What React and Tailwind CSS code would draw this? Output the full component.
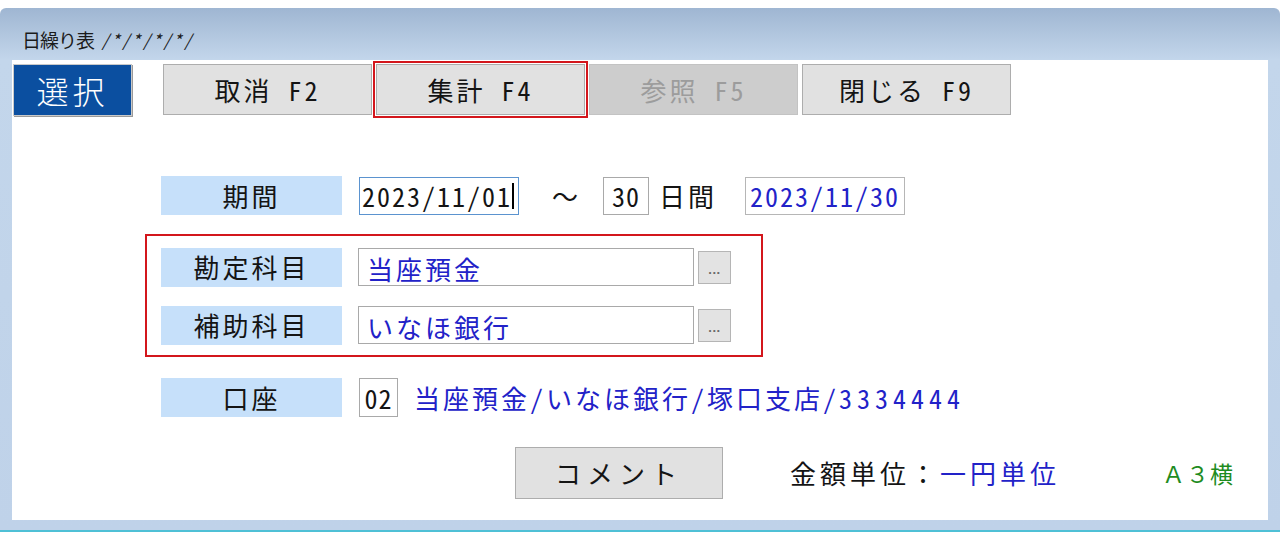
import React from 'react';

const jp = "font-['Noto_Sans_CJK_JP','Noto_Sans',sans-serif]";
const hw = "[font-feature-settings:'hwid']";

const buttons = [
    { label: '取消 F2', state: 'normal' },
    { label: '集計 F4', state: 'marked' },
    { label: '参照 F5', state: 'disabled' },
    { label: '閉じる F9', state: 'normal' },
];

function FuncButton({ label, state }) {
    const base = `flex h-[51px] w-[209px] items-center justify-center border text-[26px] tracking-[3px] leading-none ${hw}`;
    if (state === 'disabled') {
        return <div className={`${base} border-[#c3c3c3] bg-[#cdcdcd] text-[#9c9c9c]`}>{label}</div>;
    }
    const btn = <div className={`${base} border-[#adadad] bg-[#e1e1e1] text-[#141414]`}>{label}</div>;
    if (state === 'marked') {
        return <div className="-mx-[3px] border-2 border-[#d3161c] p-px">{btn}</div>;
    }
    return btn;
}

function Label({ children }) {
    return (
        <div className="flex h-[39px] w-[181px] shrink-0 items-center justify-center bg-[#c6e0fa] text-[26px] tracking-[3px] leading-none text-[#141414]">
            {children}
        </div>
    );
}

function Picker() {
    return (
        <div className="ml-[4px] flex h-[33px] w-[33px] items-end justify-center border border-[#b5b5b5] bg-[#e3e3e3] pb-[7px] font-['Liberation_Sans',sans-serif] text-[13px] font-bold leading-none tracking-[0.5px] text-[#6a6a6a]">
            ...
        </div>
    );
}

export default function App() {
    return (
        <div className={`h-[545px] w-[1280px] overflow-hidden bg-white pt-[8px] ${jp}`}>
            <div className="h-[522px] rounded-t-[6px] bg-[linear-gradient(to_bottom,#9fb6d2_0px,#c3d6eb_52px,#bfd2e9_100%)]">
                {/* title bar */}
                <div className="flex h-[52px] items-center pl-[22px] pt-[10px] leading-none text-[#1b1b1b]">
                    <span className="text-[19px] tracking-[-1px]">日繰り表</span>
                    <span className="ml-[8px] text-[17px] italic tracking-[3px]">/*/*/*/*/</span>
                </div>

                {/* client area */}
                <div className="mx-[12px] h-[460px] bg-white">
                    {/* function keys */}
                    <div className="flex h-[58px] items-center pt-px">
                        <div className="ml-px flex h-[52px] w-[119px] items-center justify-center border border-[#c9c9c9] bg-[#0b4fa0] text-[32px] font-light tracking-[4px] leading-none text-white shadow-[1px_1px_0_#9a9a9a]">
                            選択
                        </div>
                        <div className="ml-[31px] flex items-center gap-[4px]">
                            {buttons.map((b) => (
                                <FuncButton key={b.label} label={b.label} state={b.state} />
                            ))}
                        </div>
                    </div>

                    <div className="pl-[133px]">
                        {/* 期間 */}
                        <div className="ml-[16px] mt-[58px] flex h-[39px] items-center text-[26px] leading-none text-[#141414]">
                            <Label>期間</Label>
                            <div className={`ml-[17px] flex h-[38px] w-[160px] items-center border-[1.5px] border-[#5b93cf] pl-[2px] tracking-[2px] ${hw}`}>
                                2023/11/01
                                <span className="h-[26px] w-[2px] bg-black" />
                            </div>
                            <span className="ml-[33px] tracking-[3px]">～</span>
                            <div className={`ml-[22px] flex h-[38px] w-[46px] items-center justify-center border border-[#a9a9a9] tracking-[1px] ${hw}`}>
                                30
                            </div>
                            <span className="ml-[10px] tracking-[3px]">日間</span>
                            <div className={`ml-[28px] flex h-[38px] w-[160px] items-center border border-[#b6b6b6] pl-[4px] tracking-[2px] text-[#2222c8] ${hw}`}>
                                2023/11/30
                            </div>
                        </div>

                        {/* 科目 box */}
                        <div className="mt-[19px] flex h-[123px] w-[618px] flex-col gap-[20px] border-2 border-[#d3161c] pl-[14px] pt-[12px]">
                            <div className="flex h-[38px] items-center">
                                <Label>勘定科目</Label>
                                <div className="ml-[16px] flex h-[38px] w-[336px] items-center border border-[#a9a9a9] pl-[8px] pt-[3px] text-[26px] leading-none tracking-[3px] text-[#2222c8]">
                                    当座預金
                                </div>
                                <Picker />
                            </div>
                            <div className="flex h-[38px] items-center">
                                <Label>補助科目</Label>
                                <div className="ml-[16px] flex h-[38px] w-[336px] items-center border border-[#a9a9a9] pl-[8px] pt-[3px] text-[26px] leading-none tracking-[3px] text-[#2222c8]">
                                    いなほ銀行
                                </div>
                                <Picker />
                            </div>
                        </div>

                        {/* 口座 */}
                        <div className="ml-[16px] mt-[21px] flex h-[39px] items-center text-[26px] leading-none">
                            <Label>口座</Label>
                            <div className={`ml-[17px] flex h-[39px] w-[39px] items-center justify-center border border-[#a9a9a9] tracking-[1px] text-[#141414] ${hw}`}>
                                02
                            </div>
                            <span className={`ml-[16px] tracking-[3px] text-[#2222c8] ${hw}`}>
                                当座預金/いなほ銀行/塚口支店/<span className="tracking-[5px]">3334444</span>
                            </span>
                        </div>
                    </div>

                    {/* bottom row */}
                    <div className="mt-[30px] flex h-[52px] items-center pr-[34px] text-[26px] leading-none">
                        <div className="ml-[503px] flex h-[52px] w-[208px] items-center justify-center border border-[#adadad] bg-[#e1e1e1] tracking-[6px] text-[#141414]">
                            コメント
                        </div>
                        <span className="ml-[67px] tracking-[4px] text-[#141414]">金額単位：</span>
                        <span className="tracking-[4px] text-[#2222c8]">一円単位</span>
                        <span className="ml-auto text-[23px] tracking-[1px] text-[#1f8c1f]">Ａ３横</span>
                    </div>
                </div>
            </div>
            <div className="h-[2px] bg-[#4fc0d6]" />
        </div>
    );
}
